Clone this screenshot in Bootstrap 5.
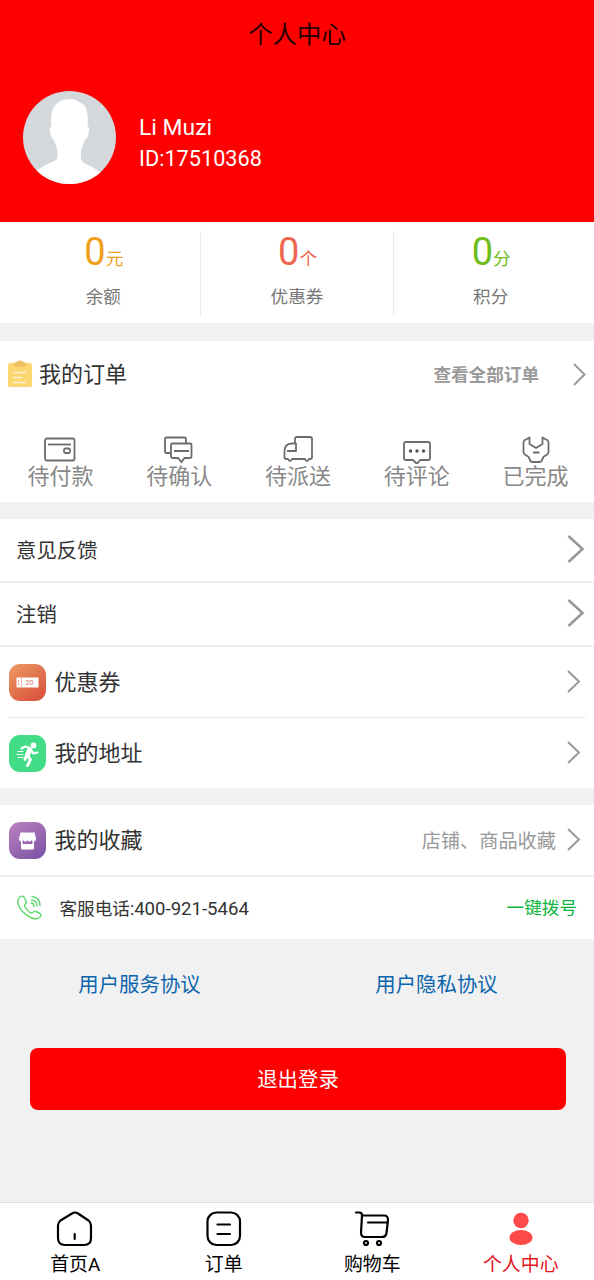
<!DOCTYPE html>
<html lang="zh-CN">
<head>
<meta charset="utf-8">
<meta name="viewport" content="width=device-width, initial-scale=1">
<title>个人中心</title>
<link href="https://cdn.jsdelivr.net/npm/bootstrap@5.3.0/dist/css/bootstrap.min.css" rel="stylesheet">
<style>
body{font-family:Roboto,"Noto Sans CJK SC",sans-serif;background:#f1f1f1;color:#333;height:1280px;overflow:hidden;line-height:1.2}
svg{display:block;flex:none}
.profile{height:222px;background:#f00}
.page-title{font-size:24.4px;height:69px;color:#200}
.user{padding:22px 23px 0;font-size:22.900px;line-height:31px}
.user-text{padding:21px 0 0 23px}
.user-id{font-size:21.700px}
.stats{height:101px;padding:9px 7px 8px}
.stat{height:84px;font-size:17.6px;color:#777}
.stat + .stat{border-left:1px solid #e9e9e9}
.stat-value{height:48px;line-height:42px;padding-left:1px}
.stat-value b{font-size:38px;font-weight:400}
.stat-name{line-height:36px}
.orders{height:161px;margin-top:18px}
.orders-head{height:67px;padding:0 8px;font-size:22px}
.orders-head span,.menu-plain span,.menu-icon span,.phone span,.terms span{padding-top:2px}
.orders-all{font-size:17.6px;font-weight:700;color:#999;margin-right:34px}
.order-row{padding-left:1px;margin-right:-1px}
.order-state{font-size:22px;color:#888;height:94px;padding-top:26px}
.order-state span{line-height:26px}
.menu{margin-top:17px}
.menu-plain{height:64px;font-size:20.4px;padding:0 9px 0 16px;border-bottom:2px solid #eee}
.menu-plain svg,.menu-icon .arrow{margin-bottom:2px}
.menu-icon{height:70px;font-size:22px;padding:0 13px 0 9px}
.inset-line{height:1px;margin:0 8px;background:#e9e9e9}
.fav{height:72px;border-bottom:2px solid #eee}
.menu-icon .fav-note{font-size:19.2px;color:#999;margin-right:11px;padding-top:3px}
.tile{width:37px;height:37px;border-radius:11px;margin-right:8.500px}
.tile-coupon{background:linear-gradient(145deg,#ec9b65,#d84b38)}
.tile-run{background:#43dc86}
.tile-shop{background:linear-gradient(145deg,#bd82bf,#7851a4)}
.phone{height:62px;font-size:17.6px;padding:0 17px 0 17px}
.phone b{font-size:18.600px;font-weight:400}
.phone-text{margin-left:17.500px}
.call{color:#0fb541}
.terms{font-size:20.4px;height:91px;color:#0d65ad}
.terms span{width:297px;padding-right:18px}
.logout{margin:18px 28px 0 30px;height:62px;border-radius:8px;border:0;background:#f00;font-size:20.4px;color:#fff;padding-top:3px}
.tabs{height:78px;border-top:1px solid #e0e0e0;font-size:18.9px;color:#000;padding-left:1px;margin-right:-1px}
.tabs svg{margin:7px 0 6px}
.tab-on{color:#e3131b}
</style>
</head>
<body class="d-flex flex-column">
<header class="profile flex-shrink-0">
  <div class="page-title d-flex align-items-center justify-content-center">个人中心</div>
  <div class="user d-flex text-white">
    <svg width="93" height="93" viewBox="0 0 93 93"><defs><clipPath id="face"><circle cx="46.500" cy="46.500" r="46.500"/></clipPath></defs><g clip-path="url(#face)"><path fill="#d4d7db" d="M0 0h93v93H0z"/><path fill="#fff" d="M28.500 35C26 18 33 8 47 8q6 0 9 3c7 2 10 10 8.500 24q2.500 1 1 7-1 6-4 7c-1 5-3 8-3.500 11v8q1 3 5 5c7 3 12 6 16 10v12H12V82c4-5 8-7 17-11q5-2 5.500-4v-7c-1-4-2-7-3.500-11-3-1-6-12-2.500-14z"/></g></svg>
    <div class="user-text"><div>Li Muzi</div><div class="user-id">ID:17510368</div></div>
  </div>
</header>

<section class="stats bg-white d-flex text-center flex-shrink-0">
  <div class="stat col"><div class="stat-value" style="color:#ef9f1c"><b>0</b>元</div><div class="stat-name">余额</div></div>
  <div class="stat col"><div class="stat-value" style="color:#ee6650"><b>0</b>个</div><div class="stat-name">优惠券</div></div>
  <div class="stat col"><div class="stat-value" style="color:#6fbd1c"><b>0</b>分</div><div class="stat-name">积分</div></div>
</section>

<section class="orders bg-white flex-shrink-0">
  <div class="orders-head d-flex align-items-center">
    <svg width="24" height="28" viewBox="0 0 24 28" style="margin:0 7px 2px 0"><path fill="#fcd671" d="M2 3h20q2 0 2 2v20q0 2-2 2H2q-2 0-2-2V5q0-2 2-2z"/><path fill="#f0c160" d="M6 2.500h2Q9 .5 12 .5t4 2h2V5q0 2-2 2H8Q6 7 6 5z"/><path stroke="#fff3cd" stroke-width="1.500" d="M5 12.500h13M5 17.500h9M5 22.500h13"/></svg>
    <span>我的订单</span><span class="orders-all ms-auto">查看全部订单</span>
    <svg width="13" height="23" viewBox="0 0 13 23" fill="none" stroke="#999" stroke-width="2"><path d="m1 1 10.500 10.500L1 22"/></svg>
  </div>
  <div class="order-row d-flex text-center">
    <div class="order-state col d-flex flex-column align-items-center"><svg width="36" height="30" viewBox="0 0 36 30" fill="none" stroke="#6c6c6c" stroke-width="1.800"><rect x="3" y="4.500" width="29.500" height="22" rx="2"/><path d="M6 10.500h23"/><rect x="22" y="14.500" width="6" height="4.500" rx="1.500"/></svg><span>待付款</span></div>
    <div class="order-state col d-flex flex-column align-items-center"><svg width="36" height="30" viewBox="0 0 36 30" fill="none" stroke="#6c6c6c" stroke-width="1.800"><path d="M10 19H5.500q-1.500 0-1.500-1.500V5q0-1.500 1.500-1.500h18Q25 3.500 25 5v4"/><path d="M11.500 9.500H29q1.500 0 1.500 1.500v11.500q0 1.500-1.500 1.500h-5.500L20.500 28l-3.500-4h-5.500q-1.500 0-1.500-1.500V11q0-1.500 1.500-1.500zM13 17h15"/></svg><span>待确认</span></div>
    <div class="order-state col d-flex flex-column align-items-center"><svg width="36" height="30" viewBox="0 0 36 30" fill="none" stroke="#6c6c6c" stroke-width="1.800" stroke-linejoin="round"><path d="M15 9V5q0-2 2-2h13q2 0 2 2v18q0 2-2 2h-1q-2 4-4 0H12q-2 4-4 0H6q-1.500 0-1.500-2v-6q0-7 7-7.500H16V17H7"/></svg><span>待派送</span></div>
    <div class="order-state col d-flex flex-column align-items-center"><svg width="36" height="30" viewBox="0 0 36 30" fill="none" stroke="#6c6c6c" stroke-width="1.800" stroke-linejoin="round"><path d="M7 8h22q2 0 2 2v14q0 2-2 2h-8l-3 4-4-4H7q-2 0-2-2V10q0-2 2-2z"/><g fill="#555" stroke="none"><circle cx="11.500" cy="17" r="1.700"/><circle cx="18" cy="17" r="1.700"/><circle cx="24.500" cy="17" r="1.700"/></g></svg><span>待评论</span></div>
    <div class="order-state col d-flex flex-column align-items-center"><svg width="36" height="30" viewBox="0 0 36 30" fill="none" stroke="#6c6c6c" stroke-width="1.800" stroke-linejoin="round"><path d="M11.500 3.500 7 6Q5.500 7 5.500 8.500V18q0 2 2 3l3 1.800 2 4.200q.5 1 2 1h7q1.500 0 2-1l2-4.200 3-1.800q2-1 2-3V8.500Q30.500 7 29 6l-4.500-2.500V10L18 14l-6.500-4zM15 18.500h6.500"/></svg><span>已完成</span></div>
  </div>
</section>

<section class="menu bg-white flex-shrink-0">
  <div class="menu-plain d-flex align-items-center justify-content-between"><span>意见反馈</span><svg width="18" height="30" viewBox="0 0 18 30" fill="none" stroke="#999" stroke-width="2.600"><path d="m1.500 2 14 13-14 13"/></svg></div>
  <div class="menu-plain d-flex align-items-center justify-content-between"><span>注销</span><svg width="18" height="30" viewBox="0 0 18 30" fill="none" stroke="#999" stroke-width="2.600"><path d="m1.500 2 14 13-14 13"/></svg></div>
  <div class="menu-icon d-flex align-items-center">
    <svg class="tile tile-coupon" viewBox="0 0 37 37"><path fill="#fff" d="M7.500 13.500h22v10h-22z"/><path stroke="#e79b7b" stroke-dasharray="2 1" d="M12.500 13.500v10M9.500 16v5"/><text x="16.500" y="21" font-size="7" fill="#dc7858">20</text></svg>
    <span>优惠券</span><svg class="arrow ms-auto" width="14" height="23" viewBox="0 0 14 23" fill="none" stroke="#999" stroke-width="2"><path d="m1 1 11 10.500L1 22"/></svg>
  </div>
  <div class="inset-line"></div>
  <div class="menu-icon d-flex align-items-center">
    <svg class="tile tile-run" viewBox="0 0 37 37" fill="none" stroke="#fff" stroke-linecap="round" stroke-linejoin="round"><circle cx="24.500" cy="10.500" r="2.900" fill="#fff" stroke="none"/><path stroke-width="2.200" d="m12.500 13.500 3.500-2 5 1.500m1 2 2.500 3.500 4-1"/><path stroke-width="5" d="m20.500 15-2 5"/><path stroke-width="2.800" d="m18.500 21 3 3.500-3 6M17 21.500l-1 3"/><path stroke-width="1.200" d="M9 16.500h5M8 19.500h6M9 22.500h5"/></svg>
    <span>我的地址</span><svg class="arrow ms-auto" width="14" height="23" viewBox="0 0 14 23" fill="none" stroke="#999" stroke-width="2"><path d="m1 1 11 10.500L1 22"/></svg>
  </div>
</section>

<section class="menu bg-white flex-shrink-0">
  <div class="menu-icon fav d-flex align-items-center">
    <svg class="tile tile-shop" viewBox="0 0 37 37" fill="#fff"><path d="M11.500 10.500h14l1.500 6q0 3-2.300 3-1.700 0-2-1.500-.7 1.500-2.200 1.500T18.500 18q-.5 1.500-2 1.500T14.300 18q-.4 1.500-2 1.500-2.300 0-2.300-3z"/><path d="M12 18.500h1.500V22h10v-3.500H25V26q0 1.500-1.500 1.500h-10Q12 27.500 12 26z"/></svg>
    <span>我的收藏</span><span class="fav-note ms-auto">店铺、商品收藏</span><svg class="arrow" width="14" height="23" viewBox="0 0 14 23" fill="none" stroke="#999" stroke-width="2"><path d="m1 1 11 10.500L1 22"/></svg>
  </div>
  <div class="phone d-flex align-items-center">
    <svg width="25" height="25" viewBox="0 0 25 25" fill="none" stroke="#5fd86e" stroke-width="1.400" stroke-linecap="round" stroke-linejoin="round" style="margin-bottom:2px"><path d="M2.500 2.500Q5 0 7 2l2 4q1 1.500-1 3.500-1 1 0 2.500 2 3.500 5 5.500 1.500 1 2.500 0 2-2 3.500-1l4 2q2 1.500 0 3.500-3 3-8 1Q3.500 18 1 8.500 0 4.500 2.500 2.500zM14 8q3 0 3 3.500M14.500 5q5.500.5 5.500 6M15 1.500q8 1 8 9"/></svg>
    <span class="phone-text">客服电话:<b>400-921-5464</b></span><span class="call ms-auto">一键拨号</span>
  </div>
</section>

<div class="terms d-flex flex-shrink-0 align-items-center text-center"><span>用户服务协议</span><span>用户隐私协议</span></div>
<button type="button" class="logout flex-shrink-0">退出登录</button>

<nav class="tabs bg-white d-flex mt-auto flex-shrink-0">
  <div class="col d-flex flex-column align-items-center"><svg width="38" height="38" viewBox="0 0 38 38" fill="none" stroke="#000" stroke-width="2.200" stroke-linecap="round" stroke-linejoin="round"><path d="M16 3.500q3-2 6 0l10.500 7q2.500 2 2.500 5V28q0 7-7 7H9q-7 0-7-7V15.500q0-3 2.500-5zM18.700 24v5"/></svg><span>首页A</span></div>
  <div class="col d-flex flex-column align-items-center"><svg width="38" height="38" viewBox="0 0 38 38" fill="none" stroke="#000" stroke-width="2.200" stroke-linecap="round"><rect x="2.500" y="2.500" width="32.500" height="32.500" rx="9"/><path d="M12.500 14.500H25M12.500 24H25"/></svg><span>订单</span></div>
  <div class="col d-flex flex-column align-items-center"><svg width="38" height="38" viewBox="0 0 38 38" fill="none" stroke="#000" stroke-width="2.200" stroke-linecap="round" stroke-linejoin="round"><path d="M3 2.500h3.500q2.500 0 2.500 3L8 22.500Q8 27 12 27h17q4 0 4.500-4L35 10q0-4.500-4-4.500H9M15 12.500h19"/><circle cx="13" cy="33" r="2"/><circle cx="26" cy="33" r="2"/></svg><span>购物车</span></div>
  <div class="col d-flex flex-column align-items-center tab-on"><svg width="38" height="38" viewBox="0 0 38 38" fill="#ff4a4a"><circle cx="19" cy="10.500" r="7.700"/><ellipse cx="19" cy="27.500" rx="11.500" ry="7.500"/></svg><span>个人中心</span></div>
</nav>
<script src="https://cdn.jsdelivr.net/npm/bootstrap@5.3.0/dist/js/bootstrap.bundle.min.js"></script>
</body>
</html>
